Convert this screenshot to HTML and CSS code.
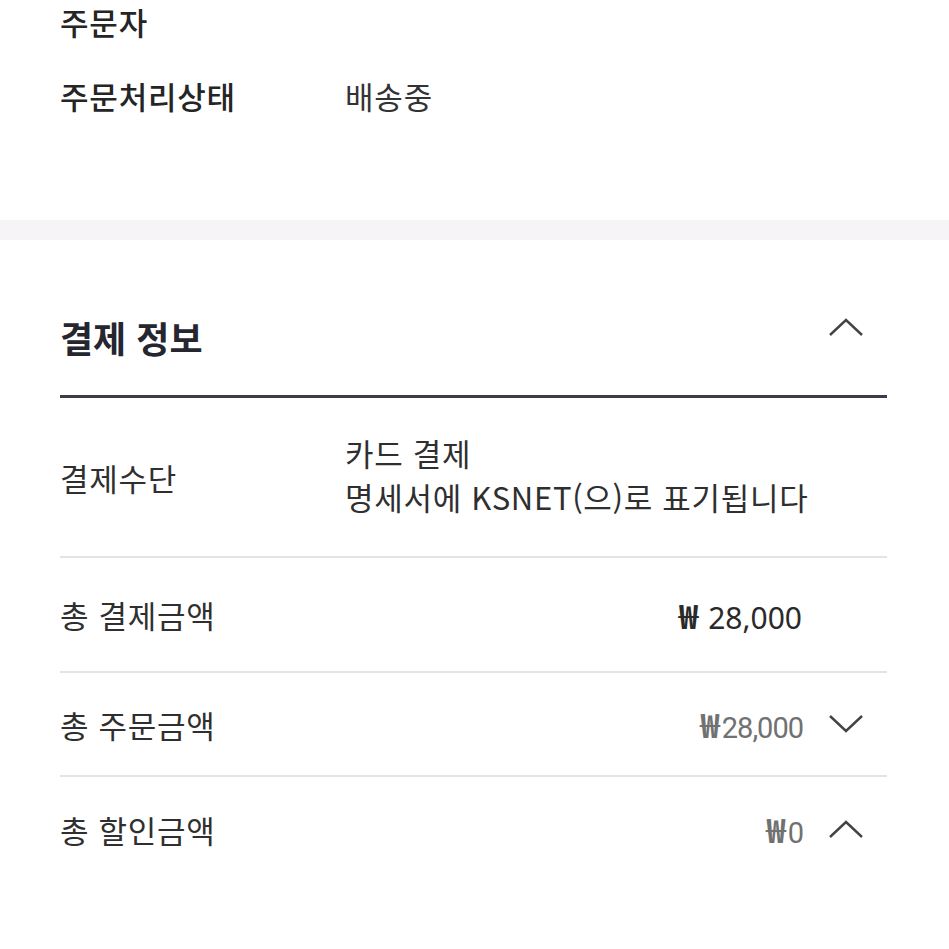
FILE: index.html
```html
<!DOCTYPE html>
<html lang="ko">
<head>
<meta charset="utf-8">
<link rel="stylesheet" href="styles.css">
</head>
<body>
<section class="order">
  <div class="orow first"><span class="olabel">주문자</span></div>
  <div class="orow"><span class="olabel">주문처리상태</span><span class="ovalue">배송중</span></div>
</section>
<div class="band"></div>
<section class="pay">
  <div class="pay-head">
    <h2 class="pay-title">결제 정보</h2>
    <svg class="chev" width="36" height="20" viewBox="0 0 36 20"><path d="M2 18 L18 3 L34 18" fill="none" stroke="#444" stroke-width="2.4"/></svg>
  </div>
  <div class="prow method">
    <span class="plabel">결제수단</span>
    <div class="pvalue-col"><div>카드 결제</div><div>명세서에 KSNET(으)로 표기됩니다</div></div>
  </div>
  <div class="prow total">
    <span class="plabel">총 결제금액</span>
    <span class="amount dark"><span class="won">₩</span>28,000</span>
    <span class="chev-space"></span>
  </div>
  <div class="prow sub">
    <span class="plabel">총 주문금액</span>
    <span class="amount gray"><span class="won">₩</span>28,000</span>
    <svg class="chev" width="36" height="20" viewBox="0 0 36 20"><path d="M2 2 L18 17 L34 2" fill="none" stroke="#444" stroke-width="2.4"/></svg>
  </div>
  <div class="prow sub last">
    <span class="plabel">총 할인금액</span>
    <span class="amount gray"><span class="won">₩</span>0</span>
    <svg class="chev" width="36" height="20" viewBox="0 0 36 20"><path d="M2 18 L18 3 L34 18" fill="none" stroke="#444" stroke-width="2.4"/></svg>
  </div>
</section>
</body>
</html>
```
FILE: styles.css
```css
* { box-sizing: border-box; }
html, body { margin: 0; padding: 0; background: #fff; }
body {
  font-family: "Noto Sans CJK KR", "Noto Sans", sans-serif;
  color: #2b2b2b;
  width: 949px;
  overflow: hidden;
}
.order { padding: 0 60px; height: 220px; }
.orow { display: flex; align-items: center; height: 75px; }
.orow.first { height: 42px; margin-bottom: 16px; }
.olabel { font-size: 31px; font-weight: 500; width: 285px; letter-spacing: 0.8px; color: #252525; white-space: nowrap; }
.ovalue { font-size: 31px; color: #333; letter-spacing: 0.8px; }
.band { height: 20px; background: #f6f4f7; }
.pay { padding: 0 62px 0 60px; }
.pay-head {
  display: flex; align-items: center; justify-content: space-between;
  height: 158px; padding-top: 38px;
  border-bottom: 3px solid #3b3b4a;
}
.pay-title { margin: 0; font-size: 36px; font-weight: 700; color: #262631; letter-spacing: 0; }
.pay-head .chev { margin-right: 23px; margin-top: -20px; }
.prow { display: flex; align-items: center; border-bottom: 2px solid #e4e4e4; font-size: 31px; letter-spacing: 0.7px; }
.prow.last { border-bottom: none; }
.plabel { width: 285px; color: #2f2f2f; white-space: nowrap; }
.method { height: 160px; }
.pvalue-col { line-height: 44px; color: #2f2f2f; margin-top: -4px; }
.total { height: 115px; }
.sub { height: 104px; }
.amount { margin-left: auto; letter-spacing: 0; }
.dark { color: #2a2a2a; font-size: 30px; font-family: "Noto Sans", sans-serif; }
.dark .won { font-family: "Noto Sans CJK KR", sans-serif; font-weight: 700; font-size: 33px; margin-right: 10px; }
.gray { color: #717171; font-size: 29px; font-family: Roboto, sans-serif; font-weight: 400; letter-spacing: -1px; }
.gray .won { font-family: "Noto Sans CJK KR", sans-serif; font-weight: 600; font-size: 33px; margin-right: 2px; letter-spacing: 0; }
.chev-space { width: 85px; }
.prow .chev { margin-left: 25px; margin-right: 23px; }
```
